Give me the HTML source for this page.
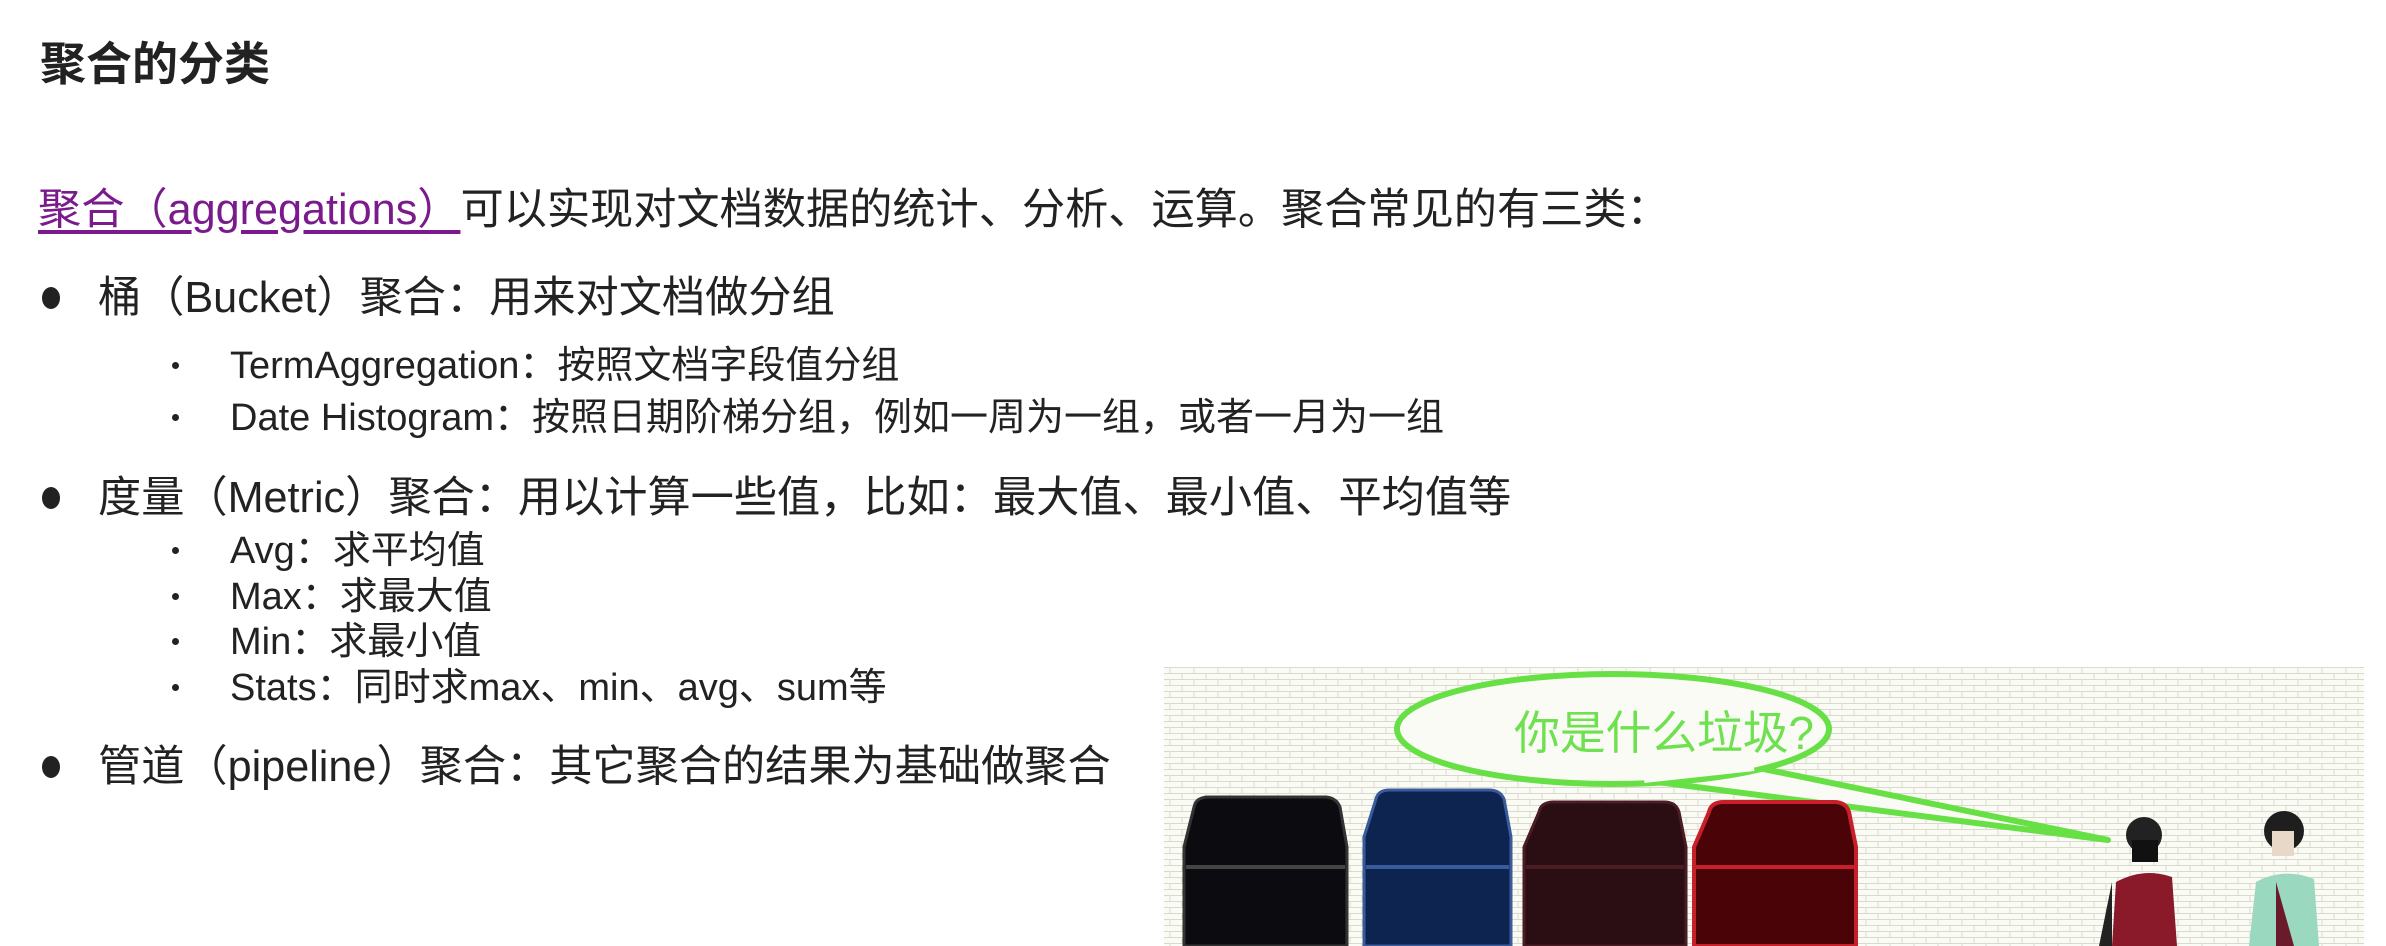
<!DOCTYPE html>
<html><head><meta charset="utf-8"><style>
body{margin:0;width:2386px;height:946px;background:#fff;position:relative;overflow:hidden;font-family:"Liberation Sans","Noto Sans CJK SC",sans-serif;color:#222}
.t{position:absolute;white-space:nowrap;line-height:1}
.big{font-size:43.2px}
.sm{font-size:38px}
.dot{position:absolute;width:18px;height:22px;border-radius:50%;background:#222}
.sd{position:absolute;width:7px;height:7px;border-radius:50%;background:#222}
</style></head><body>
<div class="t" style="left:40px;top:41px;font-size:46px;font-weight:bold;color:#222">聚合的分类</div>
<div class="t big" style="left:38px;top:189px"><span style="color:#7a1a8c;text-decoration:underline;text-underline-offset:6px">聚合（aggregations）</span>可以实现对文档数据的统计、分析、运算。聚合常见的有三类：</div>

<div class="dot" style="left:42px;top:287px"></div>
<div class="t big" style="left:98px;top:277px">桶（Bucket）聚合：用来对文档做分组</div>
<div class="sd" style="left:172px;top:362px"></div>
<div class="t sm" style="left:230px;top:347px">TermAggregation：按照文档字段值分组</div>
<div class="sd" style="left:172px;top:414px"></div>
<div class="t sm" style="left:230px;top:399px">Date Histogram：按照日期阶梯分组，例如一周为一组，或者一月为一组</div>

<div class="dot" style="left:42px;top:487px"></div>
<div class="t big" style="left:98px;top:477px">度量（Metric）聚合：用以计算一些值，比如：最大值、最小值、平均值等</div>
<div class="sd" style="left:172px;top:547px"></div>
<div class="t sm" style="left:230px;top:532px">Avg：求平均值</div>
<div class="sd" style="left:172px;top:593px"></div>
<div class="t sm" style="left:230px;top:578px">Max：求最大值</div>
<div class="sd" style="left:172px;top:638px"></div>
<div class="t sm" style="left:230px;top:623px">Min：求最小值</div>
<div class="sd" style="left:172px;top:684px"></div>
<div class="t sm" style="left:230px;top:669px">Stats：同时求max、min、avg、sum等</div>

<div class="dot" style="left:42px;top:756px"></div>
<div class="t big" style="left:98px;top:746px">管道（pipeline）聚合：其它聚合的结果为基础做聚合</div>

<svg style="position:absolute;left:1164px;top:667px" width="1200" height="279" viewBox="0 0 1200 279">
<defs><pattern id="br" width="24" height="12" patternUnits="userSpaceOnUse">
<rect width="24" height="12" fill="#fbfbf6"/><path d="M0 0.5H24M0 6.5H24M6 0V6M18 6V12" stroke="#d9d9cc" stroke-width="1"/></pattern></defs>
<rect width="1200" height="279" fill="url(#br)"/>
<path d="M470 112 L944 173 L590 100" fill="#fbfbf6" stroke="#66e044" stroke-width="6" stroke-linejoin="round"/>
<ellipse cx="449" cy="62" rx="216" ry="55" fill="#fbfbf6" stroke="#66e044" stroke-width="6"/>
<path d="M480 112 L590 100" stroke="#fbfbf6" stroke-width="8"/>
<text x="350" y="82" textLength="300" font-family="Liberation Sans,Noto Sans CJK SC,sans-serif" font-size="46" fill="#6fe04f">你是什么垃圾?</text>
<g>
<path d="M30 140 Q32 130 45 130 H160 Q172 130 176 140 L183 180 V279 H20 V180Z" fill="#0c0c10" stroke="#333" stroke-width="3"/>
<path d="M22 200 H181" stroke="#444" stroke-width="4"/>
<path d="M212 132 Q214 123 226 123 H325 Q336 123 340 132 L347 170 V279 H200 V170Z" fill="#0e2450" stroke="#3a5a9a" stroke-width="3"/>
<path d="M202 200 H345" stroke="#3a5a9a" stroke-width="4"/>
<path d="M375 145 Q377 135 390 135 H500 Q512 135 515 145 L522 180 V279 H360 V180Z" fill="#2a0e14" stroke="#4a1c24" stroke-width="3"/>
<path d="M362 200 H520" stroke="#4a1c24" stroke-width="4"/>
<path d="M545 145 Q547 135 560 135 H670 Q682 135 685 145 L692 180 V279 H530 V180Z" fill="#4a0408" stroke="#c8202a" stroke-width="4"/>
<path d="M532 200 H690" stroke="#c8202a" stroke-width="4"/>
</g>
<g>
<circle cx="980" cy="168" r="18" fill="#222"/>
<rect x="968" y="173" width="26" height="22" fill="#111"/>
<path d="M952 215 Q980 200 1008 210 L1013 279 H948Z" fill="#8a1a2a"/>
<path d="M948 215 L935 279 H948Z" fill="#222"/>
<circle cx="1120" cy="164" r="20" fill="#1e1e1e"/>
<rect x="1108" y="164" width="22" height="25" fill="#e8d8c8"/>
<path d="M1092 215 Q1120 200 1150 212 L1155 279 H1085Z" fill="#9ad8c0"/>
<path d="M1112 215 L1130 279 H1112Z" fill="#6a1a2a"/>
</g>
</svg>
</body></html>
